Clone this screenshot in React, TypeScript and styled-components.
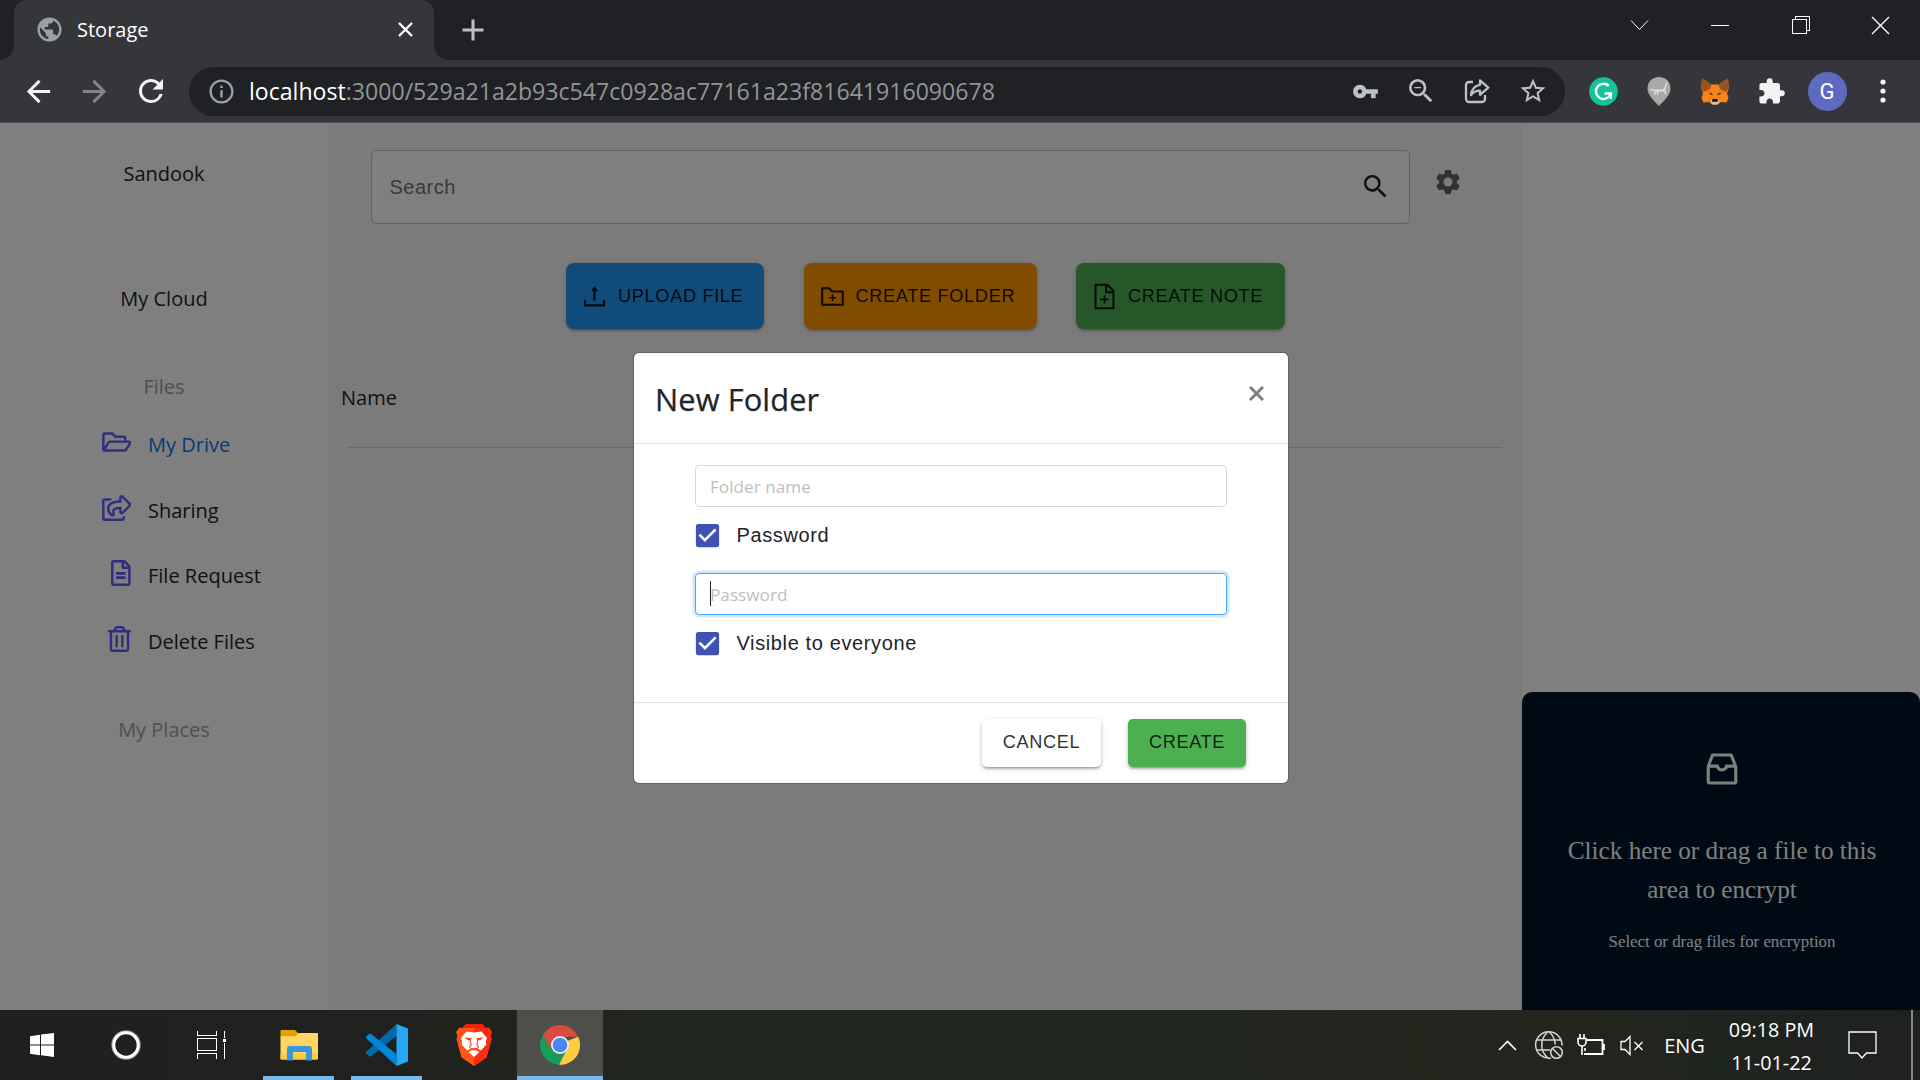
import React from "react";
import styled, { createGlobalStyle } from "styled-components";
import {
  MdArrowBack,
  MdArrowForward,
  MdCheckBox,
  MdExtension,
  MdInfoOutline,
  MdPublic,
  MdRefresh,
  MdSearch,
  MdSettings,
  MdStarBorder,
  MdVpnKey,
  MdZoomOut,
} from "react-icons/md";
import {
  AiOutlineFileAdd,
  AiOutlineFolderAdd,
  AiOutlineInbox,
  AiOutlineUpload,
} from "react-icons/ai";
import {
  FaRegFileAlt,
  FaRegFolderOpen,
  FaRegShareSquare,
  FaRegTrashAlt,
} from "react-icons/fa";

const ui = `"Segoe UI", "Open Sans", "Noto Sans", sans-serif`;
const arial = `"Liberation Sans", Arial, sans-serif`;
const times = `"Liberation Serif", "Times New Roman", serif`;

const GlobalStyle = createGlobalStyle`
  *, *::before, *::after { box-sizing: border-box; }
  body { margin: 0; overflow: hidden; font-family: ${ui}; font-size: 20px; }
  svg { display: block; flex: none; }
  button, input { font: inherit; }
`;

const Screen = styled.div`
  width: 1920px;
  height: 1080px;
  display: flex;
  flex-direction: column;
  overflow: hidden;
`;

/* ---------- browser frame ---------- */

const TabStrip = styled.header`
  height: 60px;
  flex: none;
  display: flex;
  background: #202124;
  color: #fff;
`;

const TabCurve = styled.div<{ $side: "left" | "right" }>`
  width: 14px;
  align-self: stretch;
  background: radial-gradient(
    circle at ${(p) => (p.$side === "left" ? "0" : "100%")} calc(100% - 14px),
    #202124 13.5px,
    #35363a 14px
  );
  background-size: 14px 28px;
  background-repeat: no-repeat;
  background-position: bottom;
  clip-path: inset(46px 0 0 0);
`;

const Tab = styled.div`
  width: 420px;
  display: flex;
  align-items: center;
  padding: 0 21px 1px 21px;
  background: #35363a;
  border-radius: 13px 13px 0 0;
  color: #9aa0a6;
`;

const TabTitle = styled.span`
  flex: 1;
  margin-left: 13px;
  line-height: 30px;
  color: #fff;
`;

const NewTab = styled.div`
  display: flex;
  align-items: center;
  margin-left: 14px;
`;

const WindowControls = styled.div`
  display: flex;
  margin-left: auto;
  margin-right: -1px;
  padding-bottom: 10px;
`;

const WindowControl = styled.div`
  width: 80.3px;
  display: grid;
  place-items: center;
`;

const Toolbar = styled.nav`
  height: 63px;
  flex: none;
  display: flex;
  align-items: center;
  background: #35363a;
  border-bottom: 1px solid #4a4b4e;
  color: #f1f3f4;
`;

const NavSlot = styled.div<{ $dim?: boolean }>`
  width: 56.5px;
  display: grid;
  place-items: center;
  color: ${(p) => (p.$dim ? "#85868a" : "#f1f3f4")};
`;

const NavGroup = styled.div`
  display: flex;
  width: 189px;
  padding-left: 10px;
`;

const AddressBar = styled.div`
  width: 1376px;
  height: 49px;
  display: flex;
  align-items: center;
  padding: 0 4px 0 17.5px;
  border-radius: 25px;
  background: #202124;
  color: #9aa0a6;
`;

const Url = styled.div`
  flex: 1;
  margin-left: 13.5px;
  font-size: 23.1px;
  line-height: 34px;
  color: #929598;
  b {
    font-weight: 400;
    color: #fff;
  }
`;

const IconSlot = styled.div`
  width: 56px;
  display: grid;
  place-items: center;
  color: #bdc1c6;
`;

const Extensions = styled.div`
  display: flex;
  padding-left: 10px;
`;

const ExtensionSlot = styled.div`
  width: 56px;
  display: grid;
  place-items: center;
  color: #f1f3f4;
`;

const Avatar = styled.div`
  width: 39px;
  height: 39px;
  border-radius: 50%;
  background: #5c6bc0;
  display: grid;
  place-items: center;
  font: 22px/39px Roboto, sans-serif;
  color: #fff;
`;

/* ---------- page ---------- */

const Page = styled.main`
  position: relative;
  height: 887px;
  flex: none;
  display: flex;
  background: #fff;
  color: #212529;
`;

const Sidebar = styled.aside`
  width: 328px;
  padding-top: 36px;
  display: flex;
  flex-direction: column;
`;

const SideTitle = styled.div<{ $gap: number; $muted?: boolean }>`
  margin-top: ${(p) => p.$gap}px;
  line-height: 30px;
  text-align: center;
  color: ${(p) => (p.$muted ? "#a0a0a0" : "#212529")};
`;

const SideMenu = styled.ul`
  list-style: none;
  margin: 10px 0 0;
  padding: 0;
`;

const SideItem = styled.li<{ $active?: boolean; $iconWidth: number }>`
  height: 65.7px;
  display: grid;
  grid-template-columns: 131px 1fr;
  column-gap: 17px;
  align-items: center;
  line-height: 30px;
  color: ${(p) => (p.$active ? "#0f76e6" : "#212529")};
  svg {
    justify-self: end;
    width: ${(p) => p.$iconWidth}px;
    height: 26px;
    margin-bottom: 6px;
    color: #605bff;
  }
`;

const Content = styled.section`
  width: 1194px;
  padding-top: 27px;
  background: #f6f6f6;
`;

const SearchRow = styled.div`
  display: flex;
  padding-left: 43px;
`;

const SearchBox = styled.div`
  width: 1039px;
  height: 74px;
  display: flex;
  align-items: center;
  justify-content: space-between;
  padding: 0 18px 0 17.5px;
  border: 1px solid #c4c4c4;
  border-radius: 5px;
  background: #fff;
  font-family: ${arial};
  letter-spacing: 0.5px;
  color: #757575;
  svg {
    margin-bottom: 2px;
    color: #212529;
  }
`;

const SettingsButton = styled.div`
  margin: 17px 0 0 22.5px;
  color: #5f6366;
`;

const Actions = styled.div`
  display: flex;
  gap: 39.5px;
  margin: 39px 0 0 238px;
`;

const Action = styled.div<{ $color: string; $width: number }>`
  width: ${(p) => p.$width}px;
  height: 66px;
  display: flex;
  align-items: center;
  gap: 9px;
  padding-left: 14px;
  border-radius: 8px;
  background: ${(p) => p.$color};
  box-shadow: 0 3px 2px -2px rgba(0, 0, 0, 0.2), 0 2px 3px rgba(0, 0, 0, 0.14),
    0 1px 6px rgba(0, 0, 0, 0.12);
  font-family: ${arial};
  font-size: 18.2px;
  letter-spacing: 0.65px;
  white-space: nowrap;
  color: rgba(0, 0, 0, 0.87);
`;

const ColumnHeader = styled.div`
  margin: 54px 20px 0 20px;
  line-height: 30px;
`;

const HeaderText = styled.div`
  margin-left: -7px;
`;

const Divider = styled.hr`
  margin: 34px 0 0;
  border: 0;
  border-top: 1px solid rgba(0, 0, 0, 0.14);
`;

const Aside = styled.aside`
  width: 398px;
  display: flex;
  flex-direction: column;
  justify-content: flex-end;
`;

const DropZone = styled.div`
  height: 318px;
  padding: 56px 0 0 2px;
  display: flex;
  flex-direction: column;
  align-items: center;
  border-radius: 10px 10px 0 0;
  background: #001529;
  color: #fff;
  font-family: ${times};
  text-align: center;
`;

const DropTitle = styled.p`
  width: 330px;
  margin: 41px 0 0;
  font-size: 25.2px;
  line-height: 39px;
`;

const DropHint = styled.p`
  margin: 19px 0 0;
  font-size: 16.85px;
  line-height: 28px;
`;

/* ---------- dialog ---------- */

const Backdrop = styled.div`
  position: absolute;
  inset: 0;
  display: flex;
  justify-content: center;
  align-items: flex-start;
  padding: 229px 0 0 2px;
  background: rgba(0, 0, 0, 0.5);
`;

const Dialog = styled.div`
  width: 656px;
  height: 432px;
  display: flex;
  flex-direction: column;
  border: 1px solid rgba(0, 0, 0, 0.2);
  border-radius: 6px;
  background: #fff;
  background-clip: padding-box;
`;

const DialogHeader = styled.div`
  height: 91px;
  display: flex;
  justify-content: space-between;
  padding: 23px 24px 0 21px;
  border-bottom: 1px solid #dee2e6;
  svg {
    margin-top: 10px;
  }
`;

const DialogTitle = styled.h2`
  margin: 0;
  font-weight: 400;
  font-size: 30.8px;
  line-height: 46px;
  letter-spacing: 0.1px;
  -webkit-text-stroke: 0.25px #212529;
`;

const DialogBody = styled.div`
  flex: 1;
  padding: 21px 61px 0;
`;

const Field = styled.div<{ $focused?: boolean }>`
  height: 42px;
  display: flex;
  align-items: center;
  padding: 2px 14px 0;
  border: 1px solid ${(p) => (p.$focused ? "#40a9ff" : "#d9d9d9")};
  border-radius: 4px;
  box-shadow: ${(p) => (p.$focused ? "0 0 0 2.5px rgba(24, 144, 255, 0.2)" : "none")};
  font-size: 17.2px;
  line-height: 26px;
  color: #bfbfbf;
`;

const Caret = styled.span`
  width: 1px;
  height: 25px;
  margin: 0 -1px 3px 0;
  background: #222;
`;

const CheckRow = styled.label<{ $bottom: number }>`
  height: 30px;
  display: flex;
  align-items: center;
  gap: 13.5px;
  margin: 13px 0 ${(p) => p.$bottom}px -3px;
  font-family: ${arial};
  letter-spacing: 0.62px;
  line-height: 28px;
  svg {
    color: #3f51b5;
  }
`;

const DialogFooter = styled.div`
  height: 81px;
  display: flex;
  justify-content: flex-end;
  gap: 27px;
  padding: 16px 42px 0 0;
  border-top: 1px solid #dee2e6;
`;

const DialogButton = styled.button<{ $primary?: boolean; $width: number }>`
  width: ${(p) => p.$width}px;
  height: 48px;
  padding: 0 0 2px;
  border: 0;
  border-radius: 5px;
  background: ${(p) => (p.$primary ? "#4caf50" : "#fff")};
  box-shadow: 0 3px 2px -2px rgba(0, 0, 0, 0.2), 0 2px 3px rgba(0, 0, 0, 0.2),
    0 1px 6px rgba(0, 0, 0, 0.12);
  font-family: ${arial};
  font-size: 18.2px;
  letter-spacing: 0.6px;
  color: rgba(0, 0, 0, 0.82);
`;

/* ---------- taskbar ---------- */

const Taskbar = styled.footer`
  height: 70px;
  flex: none;
  display: flex;
  background: linear-gradient(90deg, #201f1e 0, #20211e 400px, #20261d 700px, #20261d 1200px, #26241e 1500px, #20241f 1700px, #1e211e);
  color: #fff;
`;

const TaskSlot = styled.div<{ $width: number; $active?: boolean }>`
  width: ${(p) => p.$width}px;
  display: flex;
  align-items: center;
  justify-content: center;
  background: ${(p) => (p.$active ? "#4d4f4b" : "transparent")};
`;

const RunningSlot = styled(TaskSlot)<{ $bar: number }>`
  background-image: linear-gradient(#76b9ed, #76b9ed);
  background-size: ${(p) => p.$bar}px 4px;
  background-position: bottom;
  background-repeat: no-repeat;
  background-color: ${(p) => (p.$active ? "#4d4f4b" : "transparent")};
`;

const Tray = styled.div`
  display: flex;
  align-items: center;
  margin-left: auto;
`;

const TraySlot = styled.div<{ $width: number }>`
  width: ${(p) => p.$width}px;
  display: grid;
  place-items: center;
`;

const Language = styled.div`
  width: 65px;
  padding-top: 1px;
  text-align: center;
`;

const Clock = styled.div`
  width: 109px;
  padding-top: 1px;
  font-size: 19.8px;
  line-height: 33px;
  text-align: center;
  white-space: nowrap;
`;

const ShowDesktop = styled.div`
  width: 9px;
  height: 70px;
  border-left: 2px solid #868885;
`;

/* ---------- drawings ---------- */

const CrossIcon = ({ size, stroke, color }: { size: number; stroke: number; color: string }) => (
  <svg width={size} height={size} viewBox={`0 0 ${size} ${size}`} fill="none" stroke={color} strokeWidth={stroke}>
    <path d={`M1 1L${size - 1} ${size - 1}M${size - 1} 1L1 ${size - 1}`} />
  </svg>
);

const PlusIcon = () => (
  <svg width="22" height="22" viewBox="0 0 22 22" stroke="#bdc1c6" strokeWidth="3">
    <path d="M11 .5v21M.5 11h21" />
  </svg>
);

const ShareIcon = () => (
  <svg width="26" height="26" viewBox="0 0 26 26" fill="none" stroke="currentColor" strokeWidth="2.3" strokeLinejoin="round">
    <path d="M9 4H5a3 3 0 0 0-3 3v14a3 3 0 0 0 3 3h13a3 3 0 0 0 3-3v-4" />
    <path d="M16 2.3l8.3 7.3-8.3 7.2v-4.2c-4.200 0-6.800 1.400-9 4.400.7-5.300 3.600-9.400 9-10.200z" />
  </svg>
);

const GrammarlyIcon = () => (
  <svg width="29" height="29" viewBox="0 0 29 29">
    <circle cx="14.500" cy="14.500" r="14.300" fill="#15c39a" />
    <path d="M19.800 8.900A7.600 7.600 0 1 0 21.800 16.500H15.500M21.800 16v6" fill="none" stroke="#fff" strokeWidth="2.300" />
  </svg>
);

const CatPinIcon = () => (
  <svg width="24" height="29" viewBox="0 0 24 29">
    <path d="M12 0C5 0 .500 5 .500 11.500.500 18 7 24 12 29c5-5 11.500-11 11.500-17.500C23.500 5 19 0 12 0z" fill="#a9a9a9" />
    <path d="M3.500 12l2.200-.300 1 .800h8.200c1.800-.300 2.400-1.300 2.900-3.200L19.600 4.200l.8.500-1.500 6c-.3 1.500-.6 2.300-.5 3.200l1.200 3.500-1.200.2-2-3-4.700.2-.700 3.200H9.900l.1-3.300-2 3.200-1.300.1 1-4-3.900-.600z" fill="#dcdcdc" />
  </svg>
);

const FoxIcon = () => (
  <svg width="28" height="27" viewBox="0 0 28 27">
    <path d="M1 .500l9.500 6h7L27 .500l.8 9-1.800 6L27.500 20l-2 4.500-5.500-.500-3 2.500h-6L8 24l-5.500.500-2-4.500L2 15.500l-1.800-6z" fill="#f6851b" />
    <path d="M1 .500l9.500 6L9 11l-6.500 3L.3 9.500zM27 .500l-9.500 6L19 11l6.500 3 2.200-4.500z" fill="#9a5121" />
    <path d="M2.500 14L9 11l1 3.500zM25.500 14L19 11l-1 3.500z" fill="#e2761b" />
    <path d="M7.500 15.500l4.200 2-.8-2.800zM20.500 15.500l-4.200 2 .8-2.800z" fill="#4b3023" />
    <path d="M9.500 23l2-1.500h5l2 1.500-2 3.500h-5z" fill="#d7c1b3" />
    <path d="M11.500 21h5l.5 2.800h-6z" fill="#161616" />
  </svg>
);

const DotsIcon = () => (
  <svg width="6" height="24" viewBox="0 0 6 24" fill="#f1f3f4">
    <circle cx="3" cy="3" r="2.600" />
    <circle cx="3" cy="12" r="2.600" />
    <circle cx="3" cy="21" r="2.600" />
  </svg>
);

const ChevronIcon = ({ up }: { up?: boolean }) => (
  <svg width="19" height="11" viewBox="0 0 19 11" fill="none" stroke="#fff" strokeWidth={up ? 1.6 : 1}>
    <path d={up ? "M1 10l8.500-8.500L18 10" : "M1 .500l8.500 9 8.500-9"} />
  </svg>
);

const MinimizeIcon = () => (
  <svg width="18" height="1" viewBox="0 0 18 1" shapeRendering="crispEdges">
    <rect width="18" height="1" fill="#fff" />
  </svg>
);

const RestoreIcon = () => (
  <svg width="18" height="18" viewBox="0 0 18 18" fill="none" stroke="#fff" shapeRendering="crispEdges">
    <path d="M.500 3.500h14v14h-14zM3.500 3.500v-3h14v14h-3" />
  </svg>
);

const WindowsIcon = () => (
  <svg width="24" height="24" viewBox="0 0 24 24" fill="#fff">
    <path d="M0 3.300L10 1.800v9.700H0zM11 1.600L24 0v11.500H11zM0 12.500h10v9.700L0 20.800zM11 12.500h13V24l-13-1.800z" />
  </svg>
);

const CortanaIcon = () => (
  <svg width="30" height="30" viewBox="0 0 30 30" fill="none">
    <circle cx="15" cy="15" r="13.200" stroke="#999" strokeWidth="3" />
    <circle cx="15" cy="15" r="12.200" stroke="#fff" strokeWidth="3" />
  </svg>
);

const TaskViewIcon = () => (
  <svg width="29" height="28" viewBox="0 0 29 28" fill="none" stroke="#fff" strokeWidth="1.200" shapeRendering="crispEdges">
    <path d="M.500 0v4.500h19V0M.500 7.500h19v12h-19zM.500 28v-5.500h19V28M27.500 0v7M27.500 12v16" />
    <path d="M26 8h3v3h-3z" fill="#fff" stroke="none" />
  </svg>
);

const ExplorerIcon = () => (
  <svg width="38" height="32" viewBox="0 0 38 32">
    <path d="M1.500 1H15l3 3v4H.500V2a1 1 0 0 1 1-1z" fill="#e3a008" />
    <path d="M.500 7.200H15L18.500 4H37a1 1 0 0 1 1 1v24.500a1 1 0 0 1-1 1H1.500a1 1 0 0 1-1-1z" fill="#ffd561" />
    <path d="M.500 25H38v4.500a1 1 0 0 1-1 1H1.500a1 1 0 0 1-1-1z" fill="#fbc93f" />
    <path d="M7 31.500V20a3 3 0 0 1 3-3h19a3 3 0 0 1 3 3v11.500h-6V23H13v8.500z" fill="#3a96dd" />
  </svg>
);

const CodeIcon = () => (
  <svg width="42" height="42" viewBox="0 0 42 42">
    <path d="M30.500 0v12L5 32.200a1.500 1.500 0 0 1-2 0L.600 30a1.600 1.600 0 0 1 0-2.500z" fill="#0068ad" />
    <path d="M30.500 42V30L5 10a1.500 1.500 0 0 0-2 0L.600 12.200a1.600 1.600 0 0 0 0 2.500z" fill="#0086d4" />
    <path d="M30.500 0L42 4.500v33L30.500 42z" fill="#27a8f5" />
  </svg>
);

const BraveIcon = () => (
  <svg width="36" height="42" viewBox="0 0 36 42">
    <path d="M10 0h16l3.500 4 3-.500L36 8l-1.500 4 1 3-5 18.500L18 42 5.500 33.500l-5-18.500 1-3L0 8l3.500-4.500 3 .500z" fill="#ff5416" />
    <path d="M18 0h8l3.500 4 3-.500L36 8l-1.500 4 1 3-5 18.500L18 42z" fill="#fb2d0c" />
    <path d="M10 0h16l3.500 4H6.500z" fill="#f3200b" />
    <path d="M10.500 7.500l7.500 1 7.500-1L31 14l-1.200 3.500.5 3L25 26.500 22 25l-4-1.500-4 1.500-3 1.500-5.300-6 .5-3L5 14z" fill="#fff" />
    <path d="M12.500 28l5.500-3 5.500 3L18 33z" fill="#fff" />
    <path d="M8.500 13.500l7.500.8-1.300 1.500 1 5.200-1.700 2.500 4 2.300 4-2.300-1.700-2.500 1-5.200-1.300-1.500 7.500-.8-3.500 2.700-2 .3-.500 4 1.700 3-5.200 3.500-5.200-3.500 1.700-3-.5-4-2-.3z" fill="#fb3c12" />
  </svg>
);

const ChromeIcon = () => (
  <svg width="40" height="40" viewBox="0 0 40 40">
    <path d="M3.200 9.500A19.700 19.700 0 0 0 19 39.700L27.500 24 20 20 12.500 24.200z" fill="#189d58" />
    <path d="M38.200 11.700A19.700 19.700 0 0 1 19 39.700L27.200 24 27 16z" fill="#ffcd40" />
    <path d="M2.900 10.100L12 25l8-5 7-8.300h11A19.700 19.700 0 0 0 2.900 10.100z" fill="#db4a3e" />
    <circle cx="20" cy="20" r="9" fill="#f1f1f1" />
    <circle cx="20" cy="20" r="7.300" fill="#4688f4" />
  </svg>
);

const NetworkIcon = () => (
  <svg width="30" height="30" viewBox="0 0 30 30" fill="none" stroke="#d5d6d4" strokeWidth="1.500">
    <path d="M28 15.500A13.200 13.200 0 1 0 17 28M14.500 1.500c-9 7-9 20 0 27M14.500 1.500c4.500 3.500 6.500 8 6.700 13M3 10h23.500M3 20h13" />
    <circle cx="22.500" cy="22.500" r="5.800" />
    <path d="M18.500 18.500l8 8" />
  </svg>
);

const BatteryIcon = () => (
  <svg width="29" height="22" viewBox="0 0 29 22" fill="none" stroke="#fff" strokeWidth="1.800">
    <path d="M10 6h15.500v14H7M27 10v6" />
    <path d="M3 0v4M7 0v4M1 4.500h8v3.500a4 4 0 0 1-8 0zM5 12v9M8 14v3" strokeWidth="1.600" />
  </svg>
);

const MutedIcon = () => (
  <svg width="24" height="21" viewBox="0 0 24 21" fill="none" stroke="#fff" strokeWidth="1.300">
    <path d="M1 6.500h4l5-5v18l-5-5H1zM14.500 7l8 8M22.500 7l-8 8" />
  </svg>
);

const NotificationIcon = () => (
  <svg width="29" height="28" viewBox="0 0 29 28" fill="none" stroke="#fff" strokeWidth="1.300">
    <path d="M1 1h27v21h-9.500l-4.500 5-4.500-5H1z" />
  </svg>
);

/* ---------- sections ---------- */

const menu = [
  { label: "My Drive", icon: <FaRegFolderOpen />, iconWidth: 29.5, active: true },
  { label: "Sharing", icon: <FaRegShareSquare />, iconWidth: 29.5 },
  { label: "File Request", icon: <FaRegFileAlt />, iconWidth: 19.7 },
  { label: "Delete Files", icon: <FaRegTrashAlt />, iconWidth: 23 },
];

const actions = [
  { label: "UPLOAD FILE", icon: <AiOutlineUpload size={29} />, color: "#2196f3", width: 198 },
  { label: "CREATE FOLDER", icon: <AiOutlineFolderAdd size={29} />, color: "#ff9800", width: 233 },
  { label: "CREATE NOTE", icon: <AiOutlineFileAdd size={29} />, color: "#4caf50", width: 209 },
];

const BrowserFrame = () => (
  <>
    <TabStrip>
      <TabCurve $side="left" />
      <Tab>
        <MdPublic size={29} />
        <TabTitle>Storage</TabTitle>
        <CrossIcon size={15} stroke={2.4} color="#fff" />
      </Tab>
      <TabCurve $side="right" />
      <NewTab>
        <PlusIcon />
      </NewTab>
      <WindowControls>
        <WindowControl><ChevronIcon /></WindowControl>
        <WindowControl><MinimizeIcon /></WindowControl>
        <WindowControl><RestoreIcon /></WindowControl>
        <WindowControl><CrossIcon size={19} stroke={1.3} color="#fff" /></WindowControl>
      </WindowControls>
    </TabStrip>
    <Toolbar>
      <NavGroup>
        <NavSlot><MdArrowBack size={35} /></NavSlot>
        <NavSlot $dim><MdArrowForward size={35} /></NavSlot>
        <NavSlot><MdRefresh size={36} /></NavSlot>
      </NavGroup>
      <AddressBar>
        <MdInfoOutline size={29} />
        <Url><b>localhost</b>:3000/529a21a2b93c547c0928ac77161a23f81641916090678</Url>
        <IconSlot><MdVpnKey size={27} /></IconSlot>
        <IconSlot><MdZoomOut size={32} /></IconSlot>
        <IconSlot><ShareIcon /></IconSlot>
        <IconSlot><MdStarBorder size={30} /></IconSlot>
      </AddressBar>
      <Extensions>
        <ExtensionSlot><GrammarlyIcon /></ExtensionSlot>
        <ExtensionSlot><CatPinIcon /></ExtensionSlot>
        <ExtensionSlot><FoxIcon /></ExtensionSlot>
        <ExtensionSlot><MdExtension size={29} /></ExtensionSlot>
        <ExtensionSlot><Avatar>G</Avatar></ExtensionSlot>
        <ExtensionSlot><DotsIcon /></ExtensionSlot>
      </Extensions>
    </Toolbar>
  </>
);

const NewFolderDialog = () => (
  <Backdrop>
    <Dialog role="dialog">
      <DialogHeader>
        <DialogTitle>New Folder</DialogTitle>
        <CrossIcon size={15} stroke={3} color="#7f7f7f" />
      </DialogHeader>
      <DialogBody>
        <Field>Folder name</Field>
        <CheckRow $bottom={23}><MdCheckBox size={31} />Password</CheckRow>
        <Field $focused><Caret />Password</Field>
        <CheckRow $bottom={0}><MdCheckBox size={31} />Visible to everyone</CheckRow>
      </DialogBody>
      <DialogFooter>
        <DialogButton $width={119}>CANCEL</DialogButton>
        <DialogButton $width={118} $primary>CREATE</DialogButton>
      </DialogFooter>
    </Dialog>
  </Backdrop>
);

export default function App() {
  return (
    <Screen>
      <GlobalStyle />
      <BrowserFrame />
      <Page>
        <Sidebar>
          <SideTitle $gap={0}>Sandook</SideTitle>
          <SideTitle $gap={95}>My Cloud</SideTitle>
          <SideTitle $gap={58} $muted>Files</SideTitle>
          <SideMenu>
            {menu.map((m) => (
              <SideItem key={m.label} $active={m.active} $iconWidth={m.iconWidth}>
                {m.icon}
                {m.label}
              </SideItem>
            ))}
          </SideMenu>
          <SideTitle $gap={40} $muted>My Places</SideTitle>
        </Sidebar>
        <Content>
          <SearchRow>
            <SearchBox>
              Search
              <MdSearch size={31} />
            </SearchBox>
            <SettingsButton><MdSettings size={30} /></SettingsButton>
          </SearchRow>
          <Actions>
            {actions.map((a) => (
              <Action key={a.label} $color={a.color} $width={a.width}>
                {a.icon}
                {a.label}
              </Action>
            ))}
          </Actions>
          <ColumnHeader>
            <HeaderText>Name</HeaderText>
            <Divider />
          </ColumnHeader>
        </Content>
        <Aside>
          <DropZone>
            <AiOutlineInbox size={42} />
            <DropTitle>Click here or drag a file to this area to encrypt</DropTitle>
            <DropHint>Select or drag files for encryption</DropHint>
          </DropZone>
        </Aside>
        <NewFolderDialog />
      </Page>
      <Taskbar>
        <TaskSlot $width={84}><WindowsIcon /></TaskSlot>
        <TaskSlot $width={84}><CortanaIcon /></TaskSlot>
        <TaskSlot $width={86}><TaskViewIcon /></TaskSlot>
        <RunningSlot $width={89} $bar={71}><ExplorerIcon /></RunningSlot>
        <RunningSlot $width={87} $bar={71}><CodeIcon /></RunningSlot>
        <TaskSlot $width={87}><BraveIcon /></TaskSlot>
        <RunningSlot $width={86} $bar={86} $active><ChromeIcon /></RunningSlot>
        <Tray>
          <TraySlot $width={42}><ChevronIcon up /></TraySlot>
          <TraySlot $width={42}><NetworkIcon /></TraySlot>
          <TraySlot $width={42}><BatteryIcon /></TraySlot>
          <TraySlot $width={40}><MutedIcon /></TraySlot>
          <Language>ENG</Language>
          <Clock>
            <div>09:18 PM</div>
            <div>11-01-22</div>
          </Clock>
          <TraySlot $width={72}><NotificationIcon /></TraySlot>
          <TraySlot $width={13} />
          <ShowDesktop />
        </Tray>
      </Taskbar>
    </Screen>
  );
}
